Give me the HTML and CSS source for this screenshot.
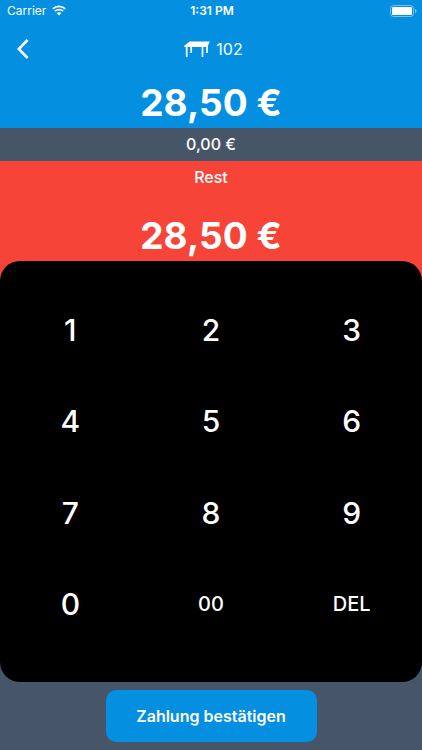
FILE: index.html
```html
<!DOCTYPE html>
<html lang="de">
<head>
<meta charset="utf-8">
<meta name="viewport" content="width=device-width, initial-scale=1">
<title>Zahlung</title>
<link rel="stylesheet" href="styles.css">
</head>
<body>
<header class="top">
  <div class="status">
    <div class="carrier">
      <span>Carrier</span>
      <svg class="wifi" viewBox="0 0 14 11" aria-hidden="true">
        <path d="M0.8 3.9C4.3 0.5 9.7 0.5 13.2 3.9M2.9 6.2C5.2 4 8.8 4 11.1 6.2" fill="none" stroke="currentColor" stroke-width="1.8"/>
        <path d="M4.6 8.1C6 6.8 8 6.8 9.4 8.1L7 10.6Z" fill="currentColor"/>
      </svg>
    </div>
    <span class="time">1:31 PM</span>
    <svg class="battery" viewBox="0 0 27 12" aria-hidden="true">
      <rect x="0.5" y="0.5" width="23" height="11" rx="3" fill="none" stroke="#fff" stroke-opacity=".45"/>
      <rect x="2" y="2" width="20" height="8" rx="1" fill="#fff"/>
      <path d="M25 4V8C27 7.4 27 4.6 25 4Z" fill="#fff" fill-opacity=".5"/>
    </svg>
  </div>
  <div class="nav">
    <button class="back" type="button" aria-label="Zurück">
      <svg viewBox="0 0 12 20" aria-hidden="true"><path d="M10.6 1L1.8 10L10.6 19" fill="none" stroke="currentColor" stroke-width="2.6"/></svg>
    </button>
    <h1 class="title">
      <svg class="table-icon" viewBox="0 0 26 16" aria-hidden="true">
        <path d="M5.7 0.5H25.8L23.4 6H0.2V4.7Z" fill="currentColor"/>
        <path d="M2.7 5V16M18.5 5V16M7.2 5V12M23 3V12" fill="none" stroke="currentColor" stroke-width="1.7"/>
      </svg>
      <span>102</span>
    </h1>
  </div>
  <div class="amount">28,50 €</div>
</header>
<main class="main">
  <div class="paid">0,00 €</div>
  <section class="rest">
    <h2 class="rest-label">Rest</h2>
    <div class="amount">28,50 €</div>
  </section>
  <div class="keypad">
    <button type="button">1</button>
    <button type="button">2</button>
    <button type="button">3</button>
    <button type="button">4</button>
    <button type="button">5</button>
    <button type="button">6</button>
    <button type="button">7</button>
    <button type="button">8</button>
    <button type="button">9</button>
    <button type="button">0</button>
    <button type="button" class="small">00</button>
    <button type="button" class="small">DEL</button>
  </div>
</main>
<footer class="footer">
  <button class="confirm" type="button">Zahlung bestätigen</button>
</footer>
</body>
</html>
```

FILE: styles.css
```css
* {
  box-sizing: border-box;
}

body {
  margin: 0;
  min-height: 100vh;
  display: flex;
  flex-direction: column;
  background: #475569;
  color: #fff;
  font-family: Inter, "Liberation Sans", sans-serif;
  font-size: 16px;
}

button {
  border: 0;
  padding: 0;
  background: none;
  color: inherit;
  font: inherit;
  cursor: pointer;
}

h1,
h2 {
  margin: 0;
  font-size: 16px;
  font-weight: 500;
}

svg {
  display: block;
}

.top {
  background: #048fe1;
}

.status {
  height: 21px;
  padding: 0 5px 0 7px;
  display: grid;
  grid-template-columns: 1fr auto 1fr;
  align-items: center;
  font-size: 12px;
}

.carrier {
  display: flex;
  align-items: center;
  gap: 6px;
}

.wifi {
  width: 14px;
  height: 11px;
}

.time {
  font-weight: 600;
}

.battery {
  width: 27px;
  height: 12px;
  justify-self: end;
}

.nav {
  height: 56px;
  padding: 0 12px 0 17px;
  display: grid;
  grid-template-columns: 1fr auto 1fr;
  align-items: center;
}

.back {
  justify-self: start;
}

.back svg {
  width: 12px;
  height: 20px;
}

.title {
  display: flex;
  align-items: center;
  gap: 6px;
  font-weight: 400;
}

.table-icon {
  width: 26px;
  height: 16px;
}

.amount {
  height: 51px;
  line-height: 52px;
  text-align: center;
  font-size: 37px;
  font-weight: 700;
}

.main {
  flex: 1;
  display: flex;
  flex-direction: column;
}

.paid {
  height: 33px;
  line-height: 33px;
  text-align: center;
  font-weight: 500;
}

.rest {
  padding-bottom: 20px;
  background: #f64438;
  text-align: center;
}

.rest-label {
  height: 49px;
  line-height: 33px;
}

.keypad {
  flex: 1;
  margin-top: -20px;
  padding: 23px 0 32px;
  display: grid;
  grid-template-columns: repeat(3, 1fr);
  grid-auto-rows: 1fr;
  border-radius: 20px;
  background: #000;
  font-size: 30px;
  font-weight: 500;
}

.small {
  font-size: 20px;
}

.footer {
  padding: 8px 0;
  display: flex;
  justify-content: center;
}

.confirm {
  width: 50%;
  min-width: 180px;
  height: 52px;
  border-radius: 10px;
  background: #048fe1;
  font-weight: 600;
}
```
